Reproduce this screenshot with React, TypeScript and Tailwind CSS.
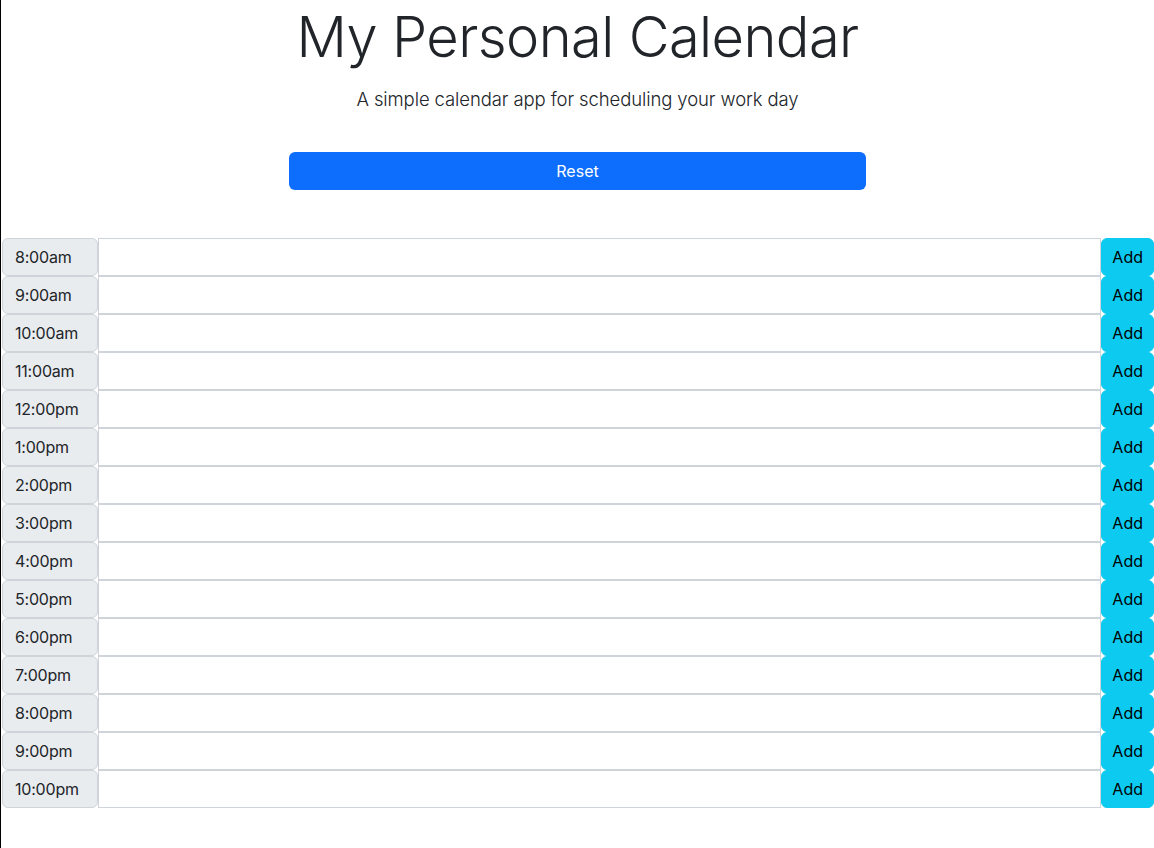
const hours = [
  '8:00am', '9:00am', '10:00am', '11:00am', '12:00pm', '1:00pm', '2:00pm', '3:00pm',
  '4:00pm', '5:00pm', '6:00pm', '7:00pm', '8:00pm', '9:00pm', '10:00pm',
];

function HourRow({ label }: { label: string }) {
  return (
    <div className="flex h-[38px]">
      <div className="w-[96px] shrink-0 flex items-center px-3 bg-[#e9ecef] border border-[#ced4da] rounded-md text-base tracking-[-0.2px] text-[#212529]">
        {label}
      </div>
      <textarea className="flex-1 border border-[#ced4da] bg-white resize-none outline-none px-3 py-1.5" />
      <button className="px-[10px] bg-[#0dcaf0] border border-[#0dcaf0] rounded-md text-base text-black">
        Add
      </button>
    </div>
  );
}

export default function App() {
  return (
    <div className="min-h-screen border-l border-black bg-white font-['Inter',sans-serif] text-[#212529]">
      <header className="text-center">
        <h1 className="text-[56px] leading-[75px] font-light tracking-[-0.6px]">My Personal Calendar</h1>
        <p className="mt-[9px] text-[18.5px] leading-[30px] font-light tracking-[-0.1px]">
          A simple calendar app for scheduling your work day
        </p>
        <div className="flex justify-center mt-[38px]">
          <button className="w-[577px] h-[38px] bg-[#0d6efd] text-white text-base rounded-md">Reset</button>
        </div>
      </header>

      <div className="mt-[48px] ml-px">
        {hours.map((h) => (
          <HourRow key={h} label={h} />
        ))}
      </div>
    </div>
  );
}
